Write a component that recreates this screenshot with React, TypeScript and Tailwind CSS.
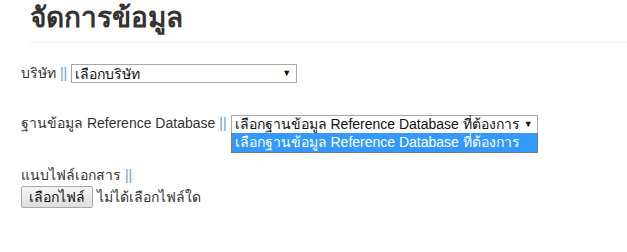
import React from "react";

const font = { fontFamily: '"Liberation Sans", "Noto Sans", Tahoma, sans-serif' };

function FakeSelect({ label, width }: { label: string; width: string }) {
  return (
    <div className={`inline-flex items-center justify-between h-[19px] border border-[#a9a9a9] bg-white pl-[3px] pr-[5px] text-[14px] text-[#111] ${width}`}>
      <span className="leading-none whitespace-nowrap">{label}</span>
      <span className="text-[9px] leading-none ml-1">▼</span>
    </div>
  );
}

export default function App() {
  return (
    <div className="w-[627px] h-[252px] bg-white text-[#333] overflow-hidden" style={font}>
      <div className="ml-[30px] pt-[1px] pb-[7px] border-b border-[#eeeeee]">
        <h1 className="text-[28px] font-bold leading-[34px] text-[#333]">จัดการข้อมูล</h1>
      </div>
      <div className="pl-[21px] text-[14px]">
        <div className="mt-[21px] flex items-center gap-[4px] h-[19px]">
          <span>บริษัท <span className="text-[#6b9bd1]">||</span></span>
          <FakeSelect label="เลือกบริษัท" width="w-[226px]" />
        </div>
        <div className="mt-[31px] flex items-start gap-[4px]">
          <span className="h-[19px] flex items-center">ฐานข้อมูล Reference Database <span className="text-[#6b9bd1] ml-1">||</span></span>
          <div className="relative">
            <FakeSelect label="เลือกฐานข้อมูล Reference Database ที่ต้องการ" width="w-[307px]" />
            <div className="absolute left-0 top-[19px] w-[307px] h-[20px] bg-[#3399ff] border border-[#7a7a7a] border-t-0 text-white text-[14px] pl-[3px] flex items-center whitespace-nowrap">
              เลือกฐานข้อมูล Reference Database ที่ต้องการ
            </div>
          </div>
        </div>
        <div className="mt-[30px] leading-[20px]">
          แนบไฟล์เอกสาร <span className="text-[#6b9bd1]">||</span>
        </div>
        <div className="mt-[1px] flex items-center gap-[4px]">
          <div className="h-[22px] px-[7px] flex items-center border border-[#a9a9a9] rounded-[2px] bg-gradient-to-b from-[#f6f6f6] to-[#dedede] text-[#111]">เลือกไฟล์</div>
          <span>ไม่ได้เลือกไฟล์ใด</span>
        </div>
      </div>
    </div>
  );
}
